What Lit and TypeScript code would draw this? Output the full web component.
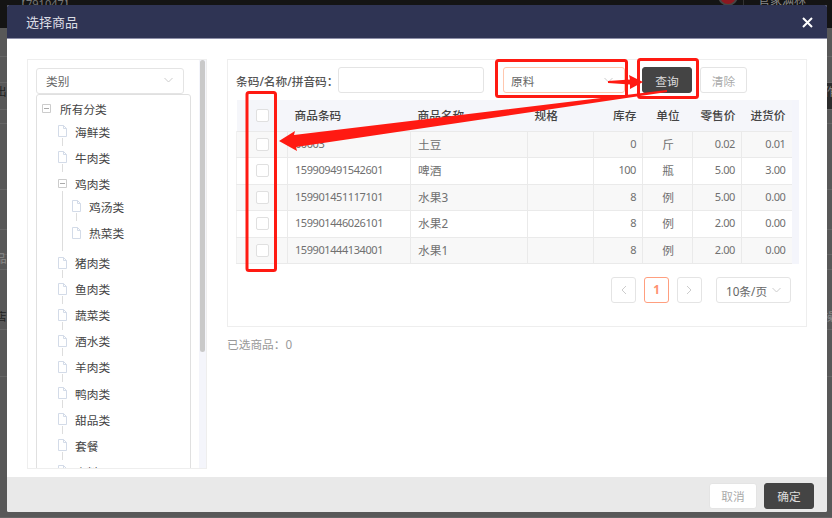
import { LitElement, html, css, svg } from "lit";
import { customElement } from "lit/decorators.js";

type Node = { name: string; open?: boolean; children?: string[] };

const TREE: Node[] = [
  { name: "海鲜类" },
  { name: "牛肉类" },
  { name: "鸡肉类", open: true, children: ["鸡汤类", "热菜类"] },
  { name: "猪肉类" },
  { name: "鱼肉类" },
  { name: "蔬菜类" },
  { name: "酒水类" },
  { name: "羊肉类" },
  { name: "鸭肉类" },
  { name: "甜品类" },
  { name: "套餐" },
  { name: "小料" },
];

const ROWS = [
  ["00003", "土豆", "", "0", "斤", "0.02", "0.01"],
  ["159909491542601", "啤酒", "", "100", "瓶", "5.00", "3.00"],
  ["159901451117101", "水果3", "", "8", "例", "5.00", "0.00"],
  ["159901446026101", "水果2", "", "8", "例", "2.00", "0.00"],
  ["159901444134001", "水果1", "", "8", "例", "2.00", "0.00"],
];

const BACK: { h: number; l?: string; lc?: string; r?: string; band?: boolean; t?: number }[] = [
  { h: 29 },
  { h: 26 },
  { h: 27, l: "出", lc: "#222", r: "作", band: true, t: 0 },
  { h: 14 },
  { h: 66, l: "：", lc: "#111", t: 30 },
  { h: 40 },
  { h: 25 },
  { h: 15, l: "品", lc: "#8a8a8a", t: -5 },
  { h: 60, l: "店", lc: "#222", r: "操", t: 38 },
  { h: 47 },
  { h: 141 },
];

const chevron = html`<svg class="chev" width="9" height="6" viewBox="0 0 9 6"><path d="M.5 1l4 4 4-4" fill="none" stroke="#ccc" stroke-width="1"/></svg>`;
const fileIcon = html`<svg class="file" width="9" height="12" viewBox="0 0 9 12"><path d="M.5.5h5l3 3v8h-8zM5.5.5v3h3" fill="#fff" stroke="#d3dbe8" stroke-width="1"/></svg>`;
const minusBox = html`<svg class="minus" width="9" height="9" viewBox="0 0 9 9"><path d="M.5.5h8v8h-8z" fill="#fff" stroke="#ccc"/><path d="M2 4.5h5" stroke="#aaa"/></svg>`;

@customElement("app-root")
export class AppRoot extends LitElement {
  static styles = css`
    :host {
      display: block;
      position: relative;
      width: 832px;
      height: 518px;
      overflow: hidden;
      background: #585858;
      font-family: "Noto Sans", "Noto Sans CJK SC", sans-serif;
      font-size: 11.7px;
      color: #666;
    }
    * { box-sizing: border-box; }
    .backdrop { position: absolute; inset: 0; }
    .topbar { height: 28px; background: #141414; color: #777; display: flex; align-items: flex-start; padding-left: 15px; line-height: 8px; font-size: 11px; }
    .top-id { flex: 1; }
    .badge { width: 20px; height: 20px; margin-top: -14px; border-radius: 50%; background: #8c1820; border: 2px solid #444; }
    .top-sep { width: 1px; height: 5px; background: #333; margin: 0 14px 0 5px; }
    .top-user { width: 74px; font-size: 12px; margin-top: -3px; color: #888; }
    .brow { display: flex; justify-content: space-between; border-bottom: 1px solid #666; }
    .bl { margin-left: -5px; align-self: flex-start; line-height: 16px; }
    .br { width: 9px; line-height: 16px; overflow: hidden; color: #888; padding-left: 1px; align-self: stretch; }
    .br.band { background: #2c2c2c; }
    .stage { position: absolute; inset: 0; padding: 5px 5px 6px 7px; display: flex; }
    .modal { flex: 1; display: flex; flex-direction: column; background: #fff; border-radius: 2px; overflow: hidden; }
    .head {
      height: 34px; flex: none; background: #2f3454; border-bottom: 1px solid #8d8fa8;
      display: flex; align-items: center; justify-content: space-between;
      padding: 2px 14px 0 19px; color: #dcdde4; font-size: 13px;
    }
    .title { margin-top: -3px; }
    .body { flex: 1; min-height: 0; display: flex; align-items: flex-start; gap: 20px; padding: 20px 20px 0; }
    .foot {
      height: 35px; flex: none; background: #e9e9e9;
      display: flex; justify-content: flex-end; align-items: center; gap: 7px; padding: 2px 13px 0 0;
    }
    .btn {
      display: flex; align-items: center; justify-content: center;
      height: 26px; border-radius: 3px; border: 1px solid #e4e4e4; background: #fff; color: #aaa;
    }
    .btn.dark { background: #444; border-color: #444; color: #ddd; }
    .cancel { width: 48px; }
    .ok { width: 50px; }

    .left { width: 180px; height: 410px; flex: none; border: 1px solid #eee; display: flex; overflow: hidden; }
    .left-main { flex: 1; padding: 8px 0 0 8px; min-width: 0; }
    .scroll { width: 7px; flex: none; background: #f4f5fb; padding: 0 1px; }
    .thumb { height: 292px; background: #c9c9c9; border-radius: 3px; }
    .select {
      display: flex; align-items: center; justify-content: space-between;
      height: 26px; border: 1px solid #e4e4e4; border-radius: 3px; background: #fff; padding: 0 10px 0 9px;
    }
    .cat { width: 148px; color: #666; padding-bottom: 2px; }
    .tree { width: 155px; height: 400px; border: 1px solid #e0e0e0; border-radius: 3px 3px 0 0; overflow: hidden; color: #444; }
    .row { height: 26.1px; display: flex; align-items: center; position: relative; }
    .row .ico { width: 17px; flex: none; display: flex; justify-content: flex-start; }
    .root { padding-left: 5px; }
    .root .ico { width: 18px; }
    .l1 { padding-left: 21px; }
    .l2 { padding-left: 35px; }
    .sub { margin: -3px 0 4px; }
    .dash::after { content: ""; position: absolute; left: 25px; top: 20px; width: 1px; height: 8px; background: #ddd; }
    .l2.dash::after { left: 39px; }
    .branch { position: relative; }
    .branch::after { content: ""; position: absolute; left: 25px; top: 21px; width: 1px; height: 60px; background: #ddd; }

    .right { flex: 1; min-width: 0; }
    .panel { height: 268px; border: 1px solid #eee; padding: 7px 9px 0 8px; }
    .search { display: flex; align-items: center; height: 26px; }
    .lab { font-weight: 500; color: #555; width: 102px; flex: none; white-space: nowrap; }
    .input { width: 146px; height: 26px; border: 1px solid #e4e4e4; border-radius: 3px; }
    .mat { width: 122px; margin-left: 19px; border-color: #ffc7ae; color: #666; padding: 0 11px 0 7px; }
    .query { width: 50px; margin-left: 17px; }
    .clear { width: 47px; margin-left: 8px; }
    .tbl-wrap { display: flex; margin-top: 7px; width: 562px; }
    table { border-collapse: collapse; table-layout: fixed; width: 555px; flex: none; }
    th { height: 31px; background: #f5f6fa; font-weight: 500; color: #444; padding: 0 6px 2px 7px; text-align: left; white-space: nowrap; }
    td { height: 26.5px; border: 1px solid #eaeaea; padding: 0 6px 2px 7px; color: #707070; white-space: nowrap; }
    th:first-child, td:first-child { padding: 0; }
    td:first-child { border-left: 1px solid #f0f0f0; }
    td:last-child { border-right: 0; }
    tbody tr:nth-child(odd) td { background: #f8f8f8; }
    .num { font-size: 11px; letter-spacing: -0.42px; }
    .r { text-align: right; }
    .c { text-align: center; }
    .ck { width: 13px; height: 13px; margin: 0 auto; display: block; background: #fff; border: 1px solid #e0e0e0; border-radius: 2px; }
    .tbl-side { width: 7px; flex: none; background: #f4f5fb; }
    .pager { display: flex; justify-content: flex-end; gap: 8px; margin-top: 13px; padding-right: 6px; }
    .pg { width: 25px; height: 26px; border: 1px solid #e4e4e4; border-radius: 3px; display: flex; align-items: center; justify-content: center; }
    .pg.on { border-color: #ff9f7f; color: #ff9170; font-weight: 700; padding-bottom: 2px; }
    .size { width: 75px; margin-left: 6px; color: #666; padding: 0 9px; }
    .picked { color: #999; margin-top: 8px; }
    .mark { position: absolute; left: 0; top: 0; pointer-events: none; }
  `;

  private leaf(name: string, level: string, dash: boolean) {
    return html`<div class="row ${level} ${dash ? "dash" : ""}"><span class="ico">${fileIcon}</span><span>${name}</span></div>`;
  }

  render() {
    const head = ["商品条码", "商品名称", "规格"];
    return html`
      <div class="backdrop">
        <div class="topbar">
          <span class="top-id">【791047】</span>
          <span class="badge"></span>
          <span class="top-sep"></span>
          <span class="top-user">管家满林</span>
        </div>
        ${BACK.map(
          (b) => html`<div class="brow" style="height:${b.h}px">
            <span class="bl" style="color:${b.lc ?? "transparent"};margin-top:${b.t ?? 0}px">${b.l ?? ""}</span>
            <span class="br ${b.band ? "band" : ""}" style="padding-top:${Math.max(b.t ?? 0, 0)}px">${b.r ?? ""}</span>
          </div>`,
        )}
      </div>
      <div class="stage">
        <div class="modal">
          <div class="head">
            <span class="title">选择商品</span>
            <svg width="11" height="11" viewBox="0 0 11 11"><path d="M1 1l9 9M10 1l-9 9" stroke="#fff" stroke-width="2"/></svg>
          </div>
          <div class="body">
            <div class="left">
              <div class="left-main">
                <div class="select cat"><span>类别</span>${chevron}</div>
                <div class="tree">
                  <div class="row root"><span class="ico">${minusBox}</span><span>所有分类</span></div>
                  <div class="sub">
                    ${TREE.map((n, i) =>
                      n.children
                        ? html`<div class="branch">
                            <div class="row l1"><span class="ico">${minusBox}</span><span>${n.name}</span></div>
                            <div class="sub">${n.children.map((c, j) => this.leaf(c, "l2", j === 0))}</div>
                          </div>`
                        : this.leaf(n.name, "l1", i < TREE.length - 1),
                    )}
                  </div>
                </div>
              </div>
              <div class="scroll"><div class="thumb"></div></div>
            </div>
            <div class="right">
              <div class="panel">
                <div class="search">
                  <span class="lab">条码/名称/拼音码：</span>
                  <div class="input"></div>
                  <div class="select mat"><span>原料</span>${chevron}</div>
                  <div class="btn dark query">查询</div>
                  <div class="btn clear">清除</div>
                </div>
                <div class="tbl-wrap">
                  <table>
                    <colgroup><col style="width:51px"/><col style="width:123px"/><col style="width:117px"/><col style="width:66px"/><col style="width:49px"/><col style="width:50px"/><col style="width:49px"/><col style="width:50px"/></colgroup>
                    <thead><tr>
                      <th><span class="ck"></span></th>
                      ${head.map((h) => html`<th>${h}</th>`)}
                      <th class="r">库存</th><th class="c">单位</th><th class="r">零售价</th><th class="r">进货价</th>
                    </tr></thead>
                    <tbody>
                      ${ROWS.map((r) => html`<tr>
                        <td><span class="ck"></span></td>
                        <td class="num">${r[0]}</td><td>${r[1]}</td><td>${r[2]}</td>
                        <td class="r num">${r[3]}</td><td class="c">${r[4]}</td><td class="r num">${r[5]}</td><td class="r num">${r[6]}</td>
                      </tr>`)}
                    </tbody>
                  </table>
                  <div class="tbl-side"></div>
                </div>
                <div class="pager">
                  <div class="pg"><svg width="7" height="10" viewBox="0 0 7 10"><path d="M6 1L2 5l4 4" fill="none" stroke="#ccc"/></svg></div>
                  <div class="pg on">1</div>
                  <div class="pg"><svg width="7" height="10" viewBox="0 0 7 10"><path d="M1 1l4 4-4 4" fill="none" stroke="#ccc"/></svg></div>
                  <div class="select size"><span>10条/页</span>${chevron}</div>
                </div>
              </div>
              <div class="picked">已选商品：0</div>
            </div>
          </div>
          <div class="foot">
            <div class="btn cancel">取消</div>
            <div class="btn dark ok">确定</div>
          </div>
        </div>
      </div>
      <svg class="mark" width="832" height="518" viewBox="0 0 832 518">
        ${svg`
          <g fill="none" stroke="#ff1a12" stroke-width="3">
            <rect x="496.5" y="60.5" width="130" height="36" rx="2"/>
            <rect x="638.5" y="59.5" width="59" height="38" rx="2"/>
            <rect x="247" y="92.5" width="28.5" height="178" rx="2"/>
          </g>
          <g fill="#ff1a12">
            <path d="M667 90L667 92 296 147 297 151 279 141 295 131 294 135z"/>
            <path d="M608 81L630 79.5 629 75 643 82 630 89 630 84.5 608 83z"/>
          </g>
        `}
      </svg>
    `;
  }
}
